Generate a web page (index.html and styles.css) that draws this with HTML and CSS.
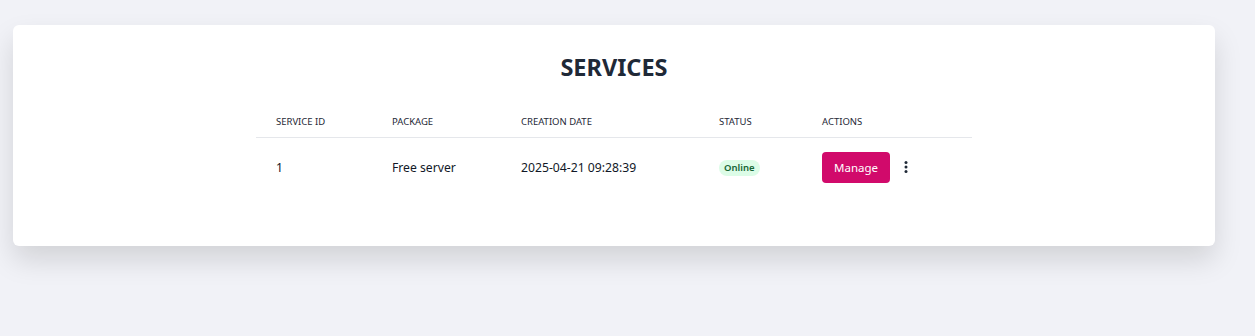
FILE: index.html
```html
<!DOCTYPE html>
<html lang="en">
<head>
  <meta charset="UTF-8" />
  <title>Services</title>
  <link rel="stylesheet" href="styles.css">
</head>
<body>
  <div class="card">
    <h1>SERVICES</h1>
    <table class="services">
      <thead>
        <tr>
          <th class="col-id">Service ID</th>
          <th class="col-pkg">Package</th>
          <th class="col-date">Creation Date</th>
          <th class="col-status">Status</th>
          <th>Actions</th>
        </tr>
      </thead>
      <tbody>
        <tr>
          <td>1</td>
          <td>Free server</td>
          <td>2025-04-21 09:28:39</td>
          <td><span class="badge">Online</span></td>
          <td>
            <div class="actions">
              <button class="manage">Manage</button>
              <button class="more" aria-label="More">
                <svg width="4" height="12" viewBox="0 0 4 12"><circle cx="2" cy="1.6" r="1.5"/><circle cx="2" cy="6" r="1.5"/><circle cx="2" cy="10.4" r="1.5"/></svg>
              </button>
            </div>
          </td>
        </tr>
      </tbody>
    </table>
  </div>
</body>
</html>
```

FILE: styles.css
```css
html {
  background: #f1f2f7;
}
body {
  font-family: 'Noto Sans', 'Open Sans', sans-serif;
  margin: 0;
  padding: 25px 40px 90px 13px;
}
.card {
  background: #fff;
  border-radius: 6px;
  box-shadow: 0 14px 28px rgba(0,0,0,0.13);
  padding: 26px 0 50px;
  width: 1202px;
}
h1 {
  text-align: center;
  color: #1f2937;
  font-size: 23.5px;
  font-weight: 700;
  margin: 0 0 22px;
  line-height: 32px;
}
.services {
  width: 716px;
  margin: 0 auto;
  border-collapse: collapse;
  color: #111827;
}
.services th {
  text-align: left;
  font-weight: 400;
  font-size: 9.5px;
  text-transform: uppercase;
  color: #1f2937;
  padding: 0 20px 0;
  height: 32px;
  border-bottom: 1px solid #e5e7eb;
}
.col-id { width: 76px; }
.col-pkg { width: 89px; }
.col-date { width: 158px; }
.col-status { width: 63px; }
.services td {
  font-size: 12.2px;
  padding: 0 20px;
  height: 58px;
}
.badge {
  display: inline-block;
  background: #dcfce7;
  color: #166534;
  font-size: 9.5px;
  font-weight: 600;
  padding: 1px 5px 2px;
  border-radius: 999px;
}
.actions {
  display: flex;
  align-items: center;
  gap: 14px;
}
.manage {
  background: #d10a6b;
  color: #fff;
  border: none;
  border-radius: 4px;
  font-family: inherit;
  font-size: 11.5px;
  width: 68px;
  height: 31px;
  cursor: pointer;
}
.more {
  background: none;
  border: none;
  padding: 0;
  display: flex;
  fill: #1f2937;
  cursor: pointer;
}
```
